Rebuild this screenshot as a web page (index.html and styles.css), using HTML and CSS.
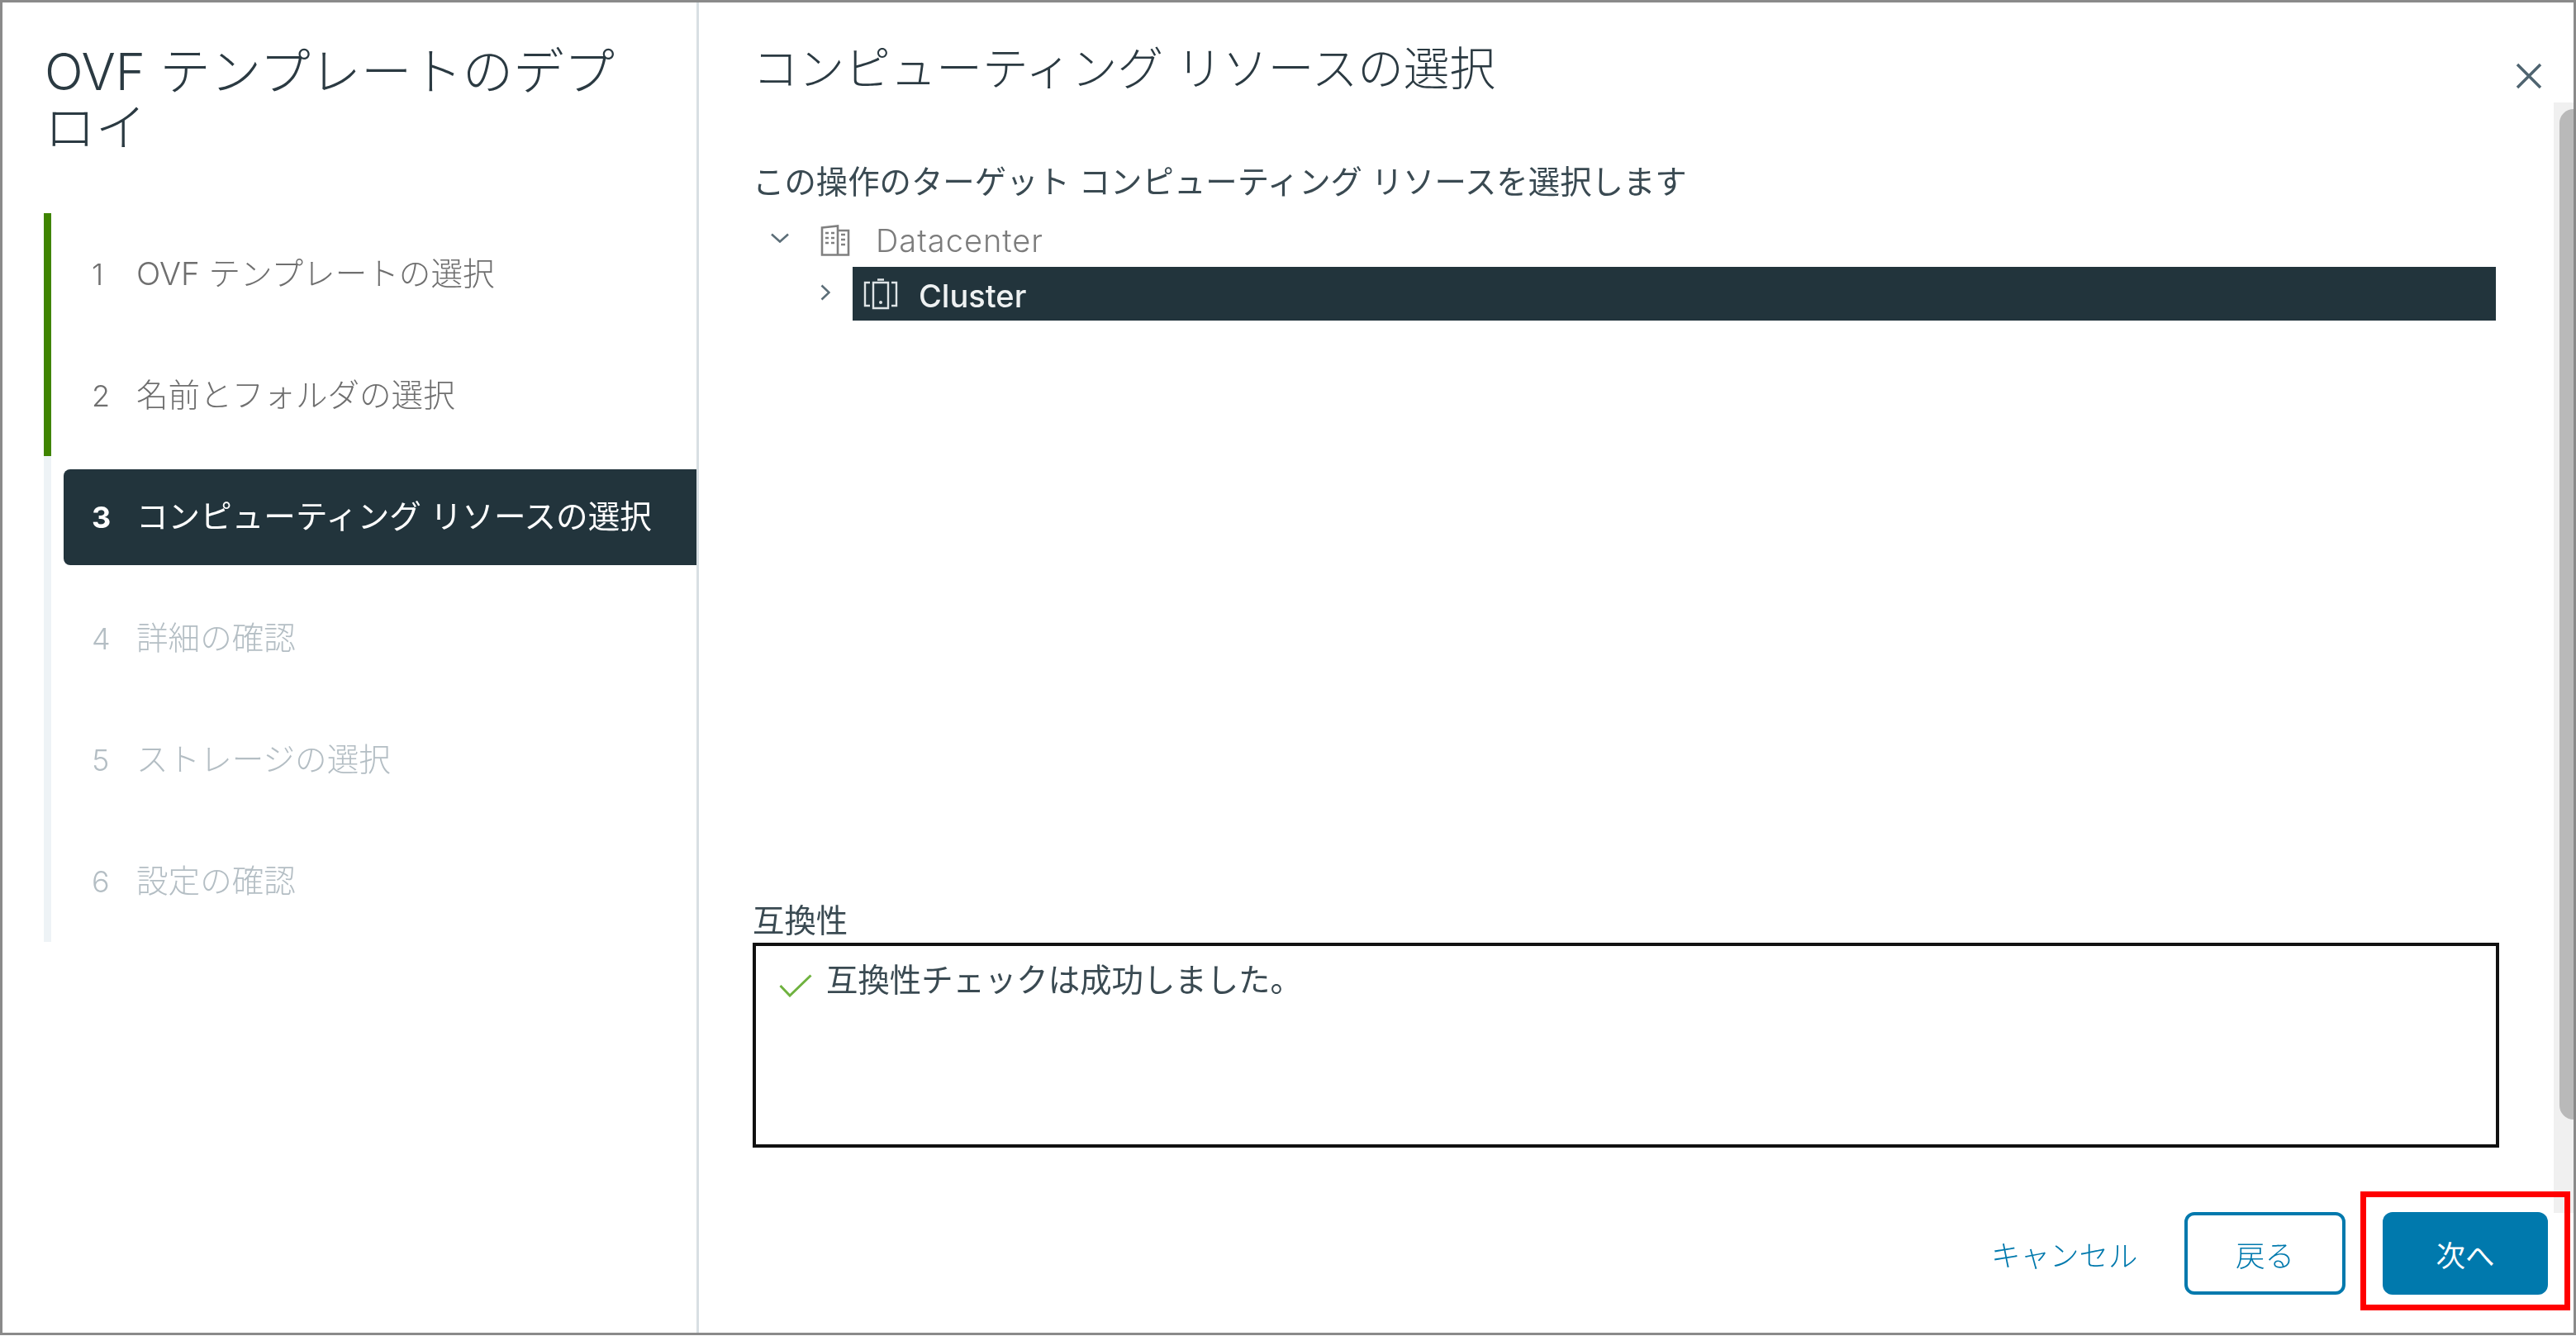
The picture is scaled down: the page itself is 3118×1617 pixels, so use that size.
FILE: index.html
```html
<!DOCTYPE html>
<html lang="ja">
<head>
<meta charset="utf-8">
<title>OVF テンプレートのデプロイ</title>
<link rel="stylesheet" href="styles.css">
</head>
<body>
<div class="frame">
  <aside class="nav">
    <h1 class="nav-title">OVF テンプレートのデプロイ</h1>
    <ol class="steps">
      <li class="step done"><div class="step-row"><span class="num">1</span><span class="label">OVF テンプレートの選択</span></div></li>
      <li class="step done"><div class="step-row"><span class="num">2</span><span class="label">名前とフォルダの選択</span></div></li>
      <li class="step active"><div class="step-row"><span class="num">3</span><span class="label">コンピューティング リソースの選択</span></div></li>
      <li class="step todo"><div class="step-row"><span class="num">4</span><span class="label">詳細の確認</span></div></li>
      <li class="step todo"><div class="step-row"><span class="num">5</span><span class="label">ストレージの選択</span></div></li>
      <li class="step todo"><div class="step-row"><span class="num">6</span><span class="label">設定の確認</span></div></li>
    </ol>
  </aside>
  <main class="pane">
    <div class="scroll-track"><div class="scroll-thumb"></div></div>
    <header class="head">
      <h2 class="head-title">コンピューティング リソースの選択</h2>
      <svg class="close" viewBox="0 0 32 32" aria-label="閉じる"><path d="M2 2 30 30M30 2 2 30"/></svg>
    </header>
    <p class="sub">この操作のターゲット コンピューティング リソースを選択します</p>
    <div class="tree">
      <div class="tree-row dc">
        <svg class="chev-down" viewBox="0 0 24 12"><path d="M2 1.5 12 10.5 22 1.5"/></svg>
        <svg class="dc-icon" viewBox="0 0 36 38"><path d="M2 3.5 21 1.5V36.5H2ZM21 7H34V36.5H21M6 10H10M13 10H17M6 16H10M13 16H17M6 22H10M13 22H17M25 12H30M25 18H30M25 24H30"/></svg>
        <span>Datacenter</span>
      </div>
      <div class="tree-row cl">
        <svg class="chev-right" viewBox="0 0 12 20"><path d="M1.5 1.5 10.5 10 1.5 18.5"/></svg>
        <div class="cl-bar">
          <svg class="cl-icon" viewBox="0 0 42 38"><path d="M8 5H2V33H8M34 5H40V33H34M12 5H30V36H12ZM17 1.5H25"/><circle cx="21" cy="29" r="2"/></svg>
          <span class="cl-name">Cluster</span>
        </div>
      </div>
    </div>
    <div class="compat-label">互換性</div>
    <div class="compat-box">
      <svg class="check" viewBox="0 0 40 28"><path d="M1.5 14 13 26 38.5 1.5"/></svg>
      <span>互換性チェックは成功しました。</span>
    </div>
    <footer class="foot">
      <button class="btn link">キャンセル</button>
      <button class="btn outline">戻る</button>
      <div class="annot"><button class="btn primary">次へ</button></div>
    </footer>
  </main>
</div>
</body>
</html>
```
FILE: styles.css
```css
* { box-sizing: border-box; }
html, body { margin: 0; padding: 0; background: #fff; }
body {
  width: 3118px;
  height: 1617px;
  overflow: hidden;
  font-family: Inter, "Noto Sans CJK JP", sans-serif;
  font-weight: 300;
  color: #2b3a42;
}
.frame {
  display: flex;
  width: 3118px;
  height: 1616px;
  border: 3px solid #8a8a8a;
  filter: blur(0.7px);
}
.nav {
  flex: 0 0 843px;
  border-right: 3px solid #d8dfe3;
  padding: 50px 0 0 50px;
}
.nav-title {
  width: 725px;
  margin: 0 0 -1px;
  padding-left: 1px;
  font-size: 61.4px;
  font-weight: 300;
  line-height: 68px;
  color: #2b3a42;
}
.steps { list-style: none; margin: 70px 0 0; padding: 0; }
.step {
  height: 147px;
  padding: 16px 0 15px 15px;
  border-left: 9px solid #eef3f6;
  font-size: 38.6px;
}
.step.done { border-left-color: #3f8400; color: #6f6f6f; }
.step.todo { color: #b4bec4; }
.step.active { color: #fff; font-weight: 400; }
.step-row {
  display: flex;
  align-items: center;
  height: 116px;
  padding-left: 34px;
  border-radius: 8px 0 0 8px;
}
.step.active .step-row { background: #22343c; }
.num { flex: 0 0 54px; font-size: 36px; }
.label { margin-bottom: 8px; }
.step.active .num { font-weight: 700; }
.pane {
  position: relative;
  flex: 1;
  display: flex;
  flex-direction: column;
  padding: 45px 4px 27px 65px;
}
.scroll-track {
  position: absolute;
  top: 121px;
  right: 0;
  width: 24px;
  height: 1344px;
  background: #f0f0f0;
  padding: 8px 0 0 7px;
}
.scroll-thumb {
  height: 1223px;
  background: #b9b9b9;
  border-radius: 18px 0 0 18px;
}
.head { display: flex; justify-content: space-between; align-items: flex-start; }
.head-title {
  margin: 0;
  font-size: 55.6px;
  font-weight: 300;
  line-height: 70px;
  color: #2b3a42;
}
.close {
  width: 32px;
  height: 32px;
  margin: 28px 34px 0 0;
  fill: none;
  stroke: #4f6470;
  stroke-width: 3.5;
}
.sub {
  margin: 77px 0 13px;
  font-size: 38.4px;
  font-weight: 400;
  line-height: 50px;
  color: #3a4a52;
}
.tree { flex: 1; margin-right: 90px; }
.tree-row { display: flex; align-items: center; height: 65px; }
.dc { padding-left: 21px; color: #7c7c7c; font-size: 38px; letter-spacing: 1px; }
.chev-down { width: 24px; height: 12px; margin-right: 37px; fill: none; stroke: #5c6e78; stroke-width: 2.6; margin-top: -6px; }
.dc-icon { width: 36px; height: 38px; margin-right: 31px; fill: none; stroke: #808080; stroke-width: 2.6; }
.chev-right { width: 12px; height: 20px; margin-left: 82px; margin-right: 27px; fill: none; stroke: #5c6e78; stroke-width: 2.6; margin-top: -4px; }
.cl-bar {
  flex: 1;
  display: flex;
  align-items: center;
  height: 65px;
  padding-left: 13px;
  background: #22343c;
  color: #eef1f2;
  font-size: 38px;
  font-weight: 500;
}
.cl-icon { width: 42px; height: 38px; margin-right: 25px; fill: none; stroke: #dfe4e6; stroke-width: 2.4; }
.cl-icon circle { fill: #dfe4e6; stroke: none; }
.cl-name { margin-top: 4px; }
.compat-label {
  font-size: 38.4px;
  font-weight: 400;
  line-height: 46px;
  margin-bottom: 4px;
  color: #3a4a52;
}
.compat-box {
  display: flex;
  align-items: flex-start;
  height: 248px;
  margin-right: 86px;
  padding: 16px 0 0 28px;
  border: 4px solid #111;
  font-size: 38.4px;
  font-weight: 400;
  line-height: 50px;
  color: #3a4a52;
}
.check { width: 40px; height: 28px; margin: 18px 17px 0 0; fill: none; stroke: #6fb23f; stroke-width: 3; flex: none; }
.foot {
  display: flex;
  align-items: flex-start;
  justify-content: flex-end;
  margin-top: 53px;
}
.btn {
  height: 100px;
  font-family: inherit;
  font-size: 35.5px;
  font-weight: 300;
  white-space: nowrap;
  border-radius: 12px;
  padding: 0;
  background: none;
  border: 0;
  color: #0079ad;
}
.link { margin: 25px 61px 0 0; width: 173px; }
.outline { margin: 25px 18px 0 0; width: 195px; border: 4px solid #0079ad; }
.annot { position: relative; padding: 18px 20px 12px; border: 7px solid #f00; }
.primary { display: block; width: 200px; background: #0079ad; color: #fff; font-weight: 400; }
```
